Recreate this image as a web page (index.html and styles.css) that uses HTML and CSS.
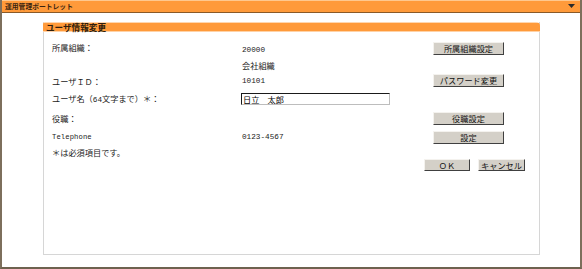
FILE: index.html
```html
<!DOCTYPE html>
<html lang="ja">
<head>
<meta charset="utf-8">
<title>運用管理ポートレット</title>
<link rel="stylesheet" href="styles.css">
</head>
<body>
<div class="portlet">
  <div class="titlebar">
    <span class="title">運用管理ポートレット</span>
    <svg class="menu" width="7" height="4" viewBox="0 0 7 4"><polygon points="0,0 7,0 3.5,4" fill="#2a2a2a"/></svg>
  </div>
  <div class="body">
    <div class="panel">
      <div class="panel-head">ユーザ情報変更</div>
      <div class="panel-content">
        <div class="row row-a">
          <div class="label">所属組織：</div>
          <div class="value stack"><span class="en">20000</span><span>会社組織</span></div>
          <button class="btn">所属組織設定</button>
        </div>
        <div class="row row-b">
          <div class="label">ユーザＩＤ：</div>
          <div class="value en">10101</div>
          <button class="btn">パスワード変更</button>
        </div>
        <div class="row row-c">
          <div class="label">ユーザ名（<span class="en">64</span>文字まで）＊：</div>
          <div class="value"><input class="field" type="text" value="日立　太郎"></div>
          <div></div>
        </div>
        <div class="row row-d">
          <div class="label">役職：</div>
          <div class="value"></div>
          <button class="btn">役職設定</button>
        </div>
        <div class="row row-e">
          <div class="label en">Telephone</div>
          <div class="value en">0123-4567</div>
          <button class="btn">設定</button>
        </div>
        <div class="note">＊は必須項目です。</div>
        <div class="actions">
          <button class="btn btn-ok">ＯＫ</button>
          <button class="btn btn-cancel">キャンセル</button>
        </div>
      </div>
    </div>
  </div>
</div>
</body>
</html>
```
FILE: styles.css
```css
* { box-sizing: border-box; }
html, body { margin: 0; padding: 0; background: #fff; }
body {
  font-family: "Noto Sans CJK JP", "Liberation Sans", sans-serif;
  font-size: 8.2px;
  color: #222;
}
.portlet {
  width: 582px;
  height: 269px;
  display: flex;
  flex-direction: column;
  border-left: 2px solid #7d6f5c;
  border-right: 2px solid #7d6f5c;
  border-bottom: 2px solid #6e624f;
  background: #fff;
}
.titlebar {
  height: 13px;
  flex: none;
  background: linear-gradient(#ffc88e 0, #ffc88e 1px, #ff9a3a 1px, #ff9a3a 12px, #8a5a28 12px);
  display: flex;
  align-items: center;
  justify-content: space-between;
  padding: 0 4px 1px 3px;
}
.title {
  font-size: 6.8px;
  font-weight: bold;
  color: #3a2410;
  line-height: 1;
}
.menu { display: block; margin-right: 1px; }
.body {
  flex: 1;
  display: flex;
  padding: 9px 40px 12px 41px;
}
.panel {
  flex: 1;
  display: flex;
  flex-direction: column;
  border: 1px solid #d6d6d6;
  border-top: none;
}
.panel-head {
  height: 10px;
  margin: 0 -1px;
  background: linear-gradient(#ffd7b0 0, #ffd7b0 1px, #ff9a3a 1px, #ff9a3a 9px, #ffd2a6 9px);
  border-top-right-radius: 4px;
  border-top-left-radius: 2px;
  font-size: 8.6px;
  font-weight: bold;
  color: #2e1c0c;
  line-height: 10px;
  padding-left: 3px;
}
.panel-content {
  flex: 1;
  padding: 10px 14px 0 8px;
  display: flex;
  flex-direction: column;
}
.row {
  display: grid;
  grid-template-columns: 190px 191px 71px;
  align-items: center;
}
.row-a { height: 30px; align-items: start; }
.row-b { height: 17px; }
.row-c { height: 20px; }
.row-d { height: 18px; }
.row-e { height: 20px; }
.label, .value { line-height: 10px; white-space: nowrap; }
.stack { display: flex; flex-direction: column; padding-top: 3px; gap: 5px; }
.en {
  font-family: "Liberation Mono", "DejaVu Sans Mono", monospace;
  font-size: 7.7px;
}
.label .en { font-size: 7.7px; }
.label.en { font-size: 7.2px; letter-spacing: 0.1px; }
.field {
  display: block;
  width: 149px;
  height: 12px;
  margin: 0 0 0 -1px;
  padding: 0 1px;
  border: 1px solid #1a1a1a;
  border-right-color: #bdbdbd;
  border-bottom-color: #bdbdbd;
  font-family: "Noto Sans CJK JP", sans-serif;
  font-size: 8.2px;
  line-height: 10px;
  color: #000;
  background: #fff;
  outline: none;
}
.btn {
  height: 13px;
  width: 71px;
  padding: 0;
  margin: 0;
  background: #d4d0c8;
  border: 1px solid;
  border-color: #f4f2ee #404040 #404040 #f4f2ee;
  font-family: "Noto Sans CJK JP", sans-serif;
  font-size: 8.2px;
  line-height: 11px;
  color: #111;
}
.note { height: 10px; line-height: 10px; }
.actions {
  margin-top: 2px;
  display: flex;
  justify-content: flex-end;
  gap: 8px;
}
.btn-ok { width: 46px; height: 12px; }
.btn-cancel { width: 47px; height: 12px; }
```
